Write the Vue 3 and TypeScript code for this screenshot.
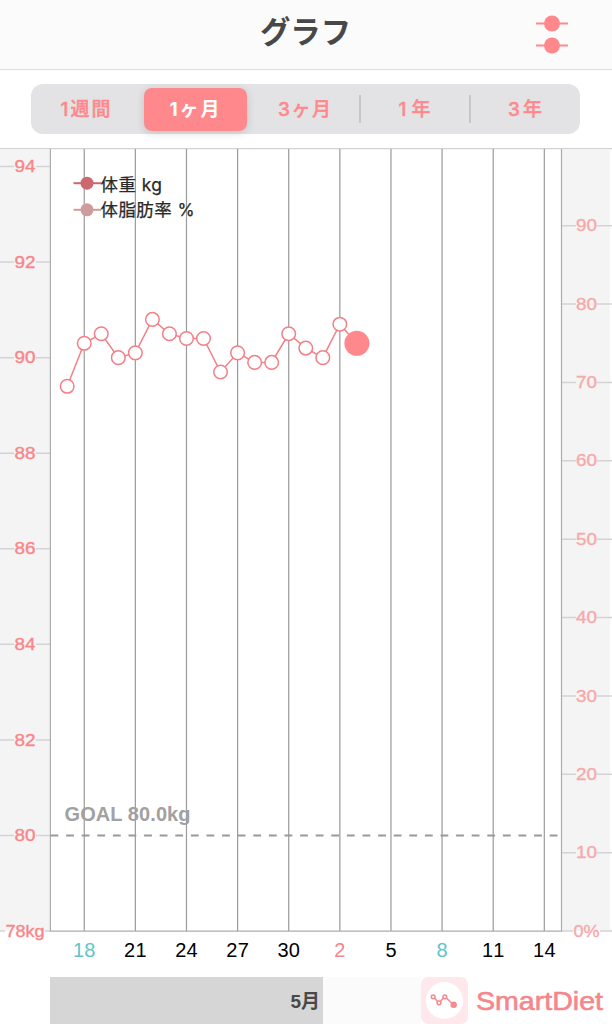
<script setup lang="ts">
interface Tick { label: string; y: number; x: number; width: number; gap: [number, number] }
interface Day { label: string; x: number; tone: 'weekday' | 'saturday' | 'sunday'; width: number }

const periods = [
  { label: '1週間', width: 50, shift: -0.5 },
  { label: '1ヶ月', width: 50, shift: -0.5 },
  { label: '3ヶ月', width: 53, shift: -0.5 },
  { label: '1年', width: 32, shift: -0.5 },
  { label: '3年', width: 34, shift: 0 },
]
const selected = 1

const bottom = 931
const kgToY = (kg: number): number => bottom - (kg - 78) * 47.78
const percentToY = (p: number): number => bottom - p * 7.837
const dayToX = (i: number): number => 67.2 + i * 17.04

const weights = [89.4, 90.3, 90.5, 90.0, 90.1, 90.8, 90.5, 90.4, 90.4, 89.7, 90.1, 89.9, 89.9, 90.5, 90.2, 90.0, 90.7, 90.3]
const points = weights.map((kg, i) => ({ x: dayToX(i), y: kgToY(kg) }))
const linePoints = points.map((p) => `${p.x},${p.y}`).join(' ')
const latest = points[points.length - 1]

const leftTicks: Tick[] = [94, 92, 90, 88, 86, 84, 82, 80, 78].map((kg) => ({
  label: kg === 78 ? '78kg' : String(kg),
  y: kgToY(kg),
  x: kg === 78 ? 5.5 : 14.5,
  width: kg === 78 ? 39 : 21,
  gap: kg === 78 ? [5, 45] : [14, 36],
}))
const rightTicks: Tick[] = [90, 80, 70, 60, 50, 40, 30, 20, 10, 0].map((p) => ({
  label: p === 0 ? '0%' : String(p),
  y: percentToY(p),
  x: p === 0 ? 573.5 : 576,
  width: p === 0 ? 26 : 21,
  gap: p === 0 ? [573, 600] : [576, 597],
}))

const days: Day[] = ['18', '21', '24', '27', '30', '2', '5', '8', '11', '14'].map((label, i) => ({
  label,
  x: dayToX(1 + i * 3),
  tone: label === '18' || label === '8' ? 'saturday' : label === '2' ? 'sunday' : 'weekday',
  width: label.length === 1 ? 11 : 22.5,
}))
</script>

<template>
  <div class="screen">
    <header class="bar">
      <svg class="title" width="120" height="56" viewBox="0 0 120 56">
        <text x="14" y="43" textLength="91" lengthAdjust="spacingAndGlyphs">グラフ</text>
      </svg>
      <svg class="settings" width="34" height="40" viewBox="0 0 34 40">
        <path d="M1 8.5H33M1 30.5H33" />
        <circle cx="17" cy="8.5" r="8" />
        <circle cx="17" cy="30.5" r="8" />
      </svg>
    </header>

    <div class="range">
      <nav class="segments">
        <button
          v-for="(period, i) in periods"
          :key="period.label"
          class="segment"
          :class="{ active: i === selected, divided: i > selected + 1 }"
        >
          <svg width="60" height="28" viewBox="0 0 60 28">
            <text
              :x="30 + period.shift - period.width / 2"
              y="21"
              :textLength="period.width"
            >{{ period.label }}</text>
          </svg>
        </button>
      </nav>
    </div>

    <svg class="chart" width="612" height="829" viewBox="0 148 612 829">
      <rect class="axis-band" x="0" y="150" width="50" height="781" />
      <rect class="axis-band" x="562" y="150" width="48" height="781" />
      <path class="top-rule" d="M0 148.5H612" />

      <g class="ticks">
        <template v-for="tick in leftTicks" :key="tick.label">
          <path :d="`M0 ${tick.y}H${tick.gap[0]}M${tick.gap[1]} ${tick.y}H50`" />
          <text :x="tick.x" :y="tick.y + 5.7" :textLength="tick.width" lengthAdjust="spacingAndGlyphs">{{ tick.label }}</text>
        </template>
      </g>
      <g class="ticks percent">
        <template v-for="tick in rightTicks" :key="tick.label">
          <path :d="`M562 ${tick.y}H${tick.gap[0]}M${tick.gap[1]} ${tick.y}H612`" />
          <text :x="tick.x" :y="tick.y + 5.7" :textLength="tick.width" lengthAdjust="spacingAndGlyphs">{{ tick.label }}</text>
        </template>
      </g>

      <path v-for="day in days" :key="day.label" class="grid" :d="`M${day.x} 149V931`" />
      <path class="frame" d="M50.4 149V931.2H561.5V149" />

      <g class="legend">
        <path class="weight" d="M73.5 183.2H101" />
        <circle class="weight" cx="87" cy="183.2" r="6.5" />
        <text x="100.5" y="190.5" textLength="61.5">体重 kg</text>
        <path class="fat" d="M73.5 209.8H101" />
        <circle class="fat" cx="87" cy="209.8" r="6.5" />
        <text x="100.5" y="216.3" textLength="94">体脂肪率 %</text>
      </g>

      <path class="goal-line" d="M50.5 835.5H561" />
      <text class="goal" x="64.5" y="821" textLength="126">GOAL 80.0kg</text>

      <polyline class="series" :points="linePoints" />
      <circle v-for="(p, i) in points" :key="i" class="point" :cx="p.x" :cy="p.y" r="6.8" />
      <circle class="latest" :cx="latest.x" :cy="latest.y" r="12.5" />

      <text
        v-for="day in days"
        :key="day.label"
        class="day"
        :class="day.tone"
        :x="day.x - day.width / 2"
        y="957"
        :textLength="day.width"
      >{{ day.label }}</text>
    </svg>

    <footer class="footer">
      <div class="previous-month">5月</div>
      <div class="current-month"></div>
      <div class="brand">
        <svg class="logo" width="47" height="47" viewBox="0 0 47 47">
          <rect class="tile" width="47" height="47" rx="7" />
          <circle cx="23.5" cy="23.5" r="18.5" fill="#fff" />
          <path d="M12.2 19.8L18 25.8L23.8 19.8L32.7 27.8" />
          <circle class="ring" cx="12.2" cy="19.8" r="1.9" />
          <circle class="ring" cx="18" cy="25.8" r="1.9" />
          <circle class="ring" cx="23.8" cy="19.8" r="1.9" />
          <circle class="dot" cx="32.7" cy="27.8" r="3.2" />
        </svg>
        <svg class="wordmark" width="140" height="47" viewBox="0 0 140 47">
          <text x="8" y="33" textLength="127" lengthAdjust="spacingAndGlyphs">SmartDiet</text>
        </svg>
      </div>
    </footer>
  </div>
</template>

<style>
body { margin: 0; background: #fff; }
</style>

<style scoped>
.screen {
  width: 612px;
  height: 1024px;
  overflow: hidden;
  background: #fff;
  display: flex;
  flex-direction: column;
  font-family: Inter, "Liberation Sans", "Noto Sans CJK JP", sans-serif;
}
.bar {
  box-sizing: border-box;
  height: 70px;
  flex: none;
  display: grid;
  grid-template-columns: 1fr 120px 1fr;
  background: #fbfbfb;
  border-bottom: 1px solid #dcdcdc;
}
.title { grid-column: 2; }
.title text {
  font: 700 31px "Noto Sans CJK JP", sans-serif;
  fill: #484848;
}
.settings { margin: 15px 0 0 169px; fill: #ff888c; }
.settings path { stroke: #ff888c; stroke-width: 2; }
.range {
  height: 78px;
  flex: none;
}
.segments {
  box-sizing: border-box;
  width: 549px;
  height: 50px;
  margin: 14px 0 0 31px;
  display: grid;
  grid-template-columns: repeat(5, 1fr);
  background: #e3e3e6;
  border-radius: 12px;
}
.segment {
  position: relative;
  display: flex;
  align-items: center;
  justify-content: center;
  padding: 0;
  border: 0;
  background: none;
}
.segment text {
  font: 500 19px Inter, "Noto Sans CJK JP", sans-serif;
  fill: #ff888c;
  stroke: #ff888c;
  stroke-width: 0.4;
}
.segment.active {
  margin: 3.5px 4px 3px 3.5px;
  border-radius: 8px;
  background: #ff888c;
  box-shadow: 0 2px 8px #00000025;
}
.segment.active text { font-weight: 700; fill: #fff; stroke: none; }
.segment.divided::before {
  content: "";
  position: absolute;
  left: -1px;
  top: 11px;
  width: 1.5px;
  height: 28px;
  background: #c7c7ca;
}
.chart { flex: none; display: block; }
.axis-band { fill: #f4f4f4; }
.top-rule { stroke: #d2d2d2; stroke-width: 1.5; }
.ticks path { stroke: #d3d3d3; stroke-width: 1.5; fill: none; }
.ticks text {
  font: 400 15.7px "Liberation Sans", sans-serif;
  fill: #fa8488;
  stroke: #fa8488;
  stroke-width: 0.35;
}
.ticks.percent text { fill: #f7a9aa; stroke: #f7a9aa; }
.grid { stroke: #9a9a9a; stroke-width: 1.2; }
.frame { fill: none; stroke: #acacac; stroke-width: 1.2; }
.legend path { stroke-width: 2; }
.legend text {
  font: 400 17.4px Inter, "Noto Sans CJK JP", sans-serif;
  fill: #292929;
  stroke: #292929;
  stroke-width: 0.25;
}
.weight { fill: #cc6870; stroke: #cc6870; }
.fat { fill: #cf9c9c; stroke: #cf9c9c; }
.legend circle { stroke: none; }
.goal-line { stroke: #999; stroke-width: 2; stroke-dasharray: 7.8 7.8; }
.goal {
  font: 700 20px "Liberation Sans", sans-serif;
  fill: #a1a1a1;
}
.series { fill: none; stroke: #f37f87; stroke-width: 1.5; }
.point { fill: #fff; stroke: #f37f87; stroke-width: 1.5; }
.latest { fill: #ff888c; }
.day {
  font: 400 20px "Liberation Sans", sans-serif;
  font-kerning: none;
  fill: #000;
}
.day.saturday { fill: #61c4cb; }
.day.sunday { fill: #f6858c; }
.footer {
  height: 47px;
  flex: none;
  display: flex;
  padding-left: 50px;
}
.previous-month {
  box-sizing: border-box;
  width: 273px;
  padding-right: 3px;
  text-align: right;
  background: #d6d6d6;
  color: #484848;
  font: 600 19px/49px "Liberation Sans", "Noto Sans CJK JP", sans-serif;
}
.current-month { width: 98px; background: #fbfbfb; }
.brand { display: flex; }
.logo { fill: none; }
.logo .tile { fill: #ffe8eb; }
.logo path, .ring { stroke: #f58990; stroke-width: 1.5; }
.logo .ring { fill: #fff; }
.logo .dot { fill: #f58990; }
.wordmark text {
  font: 400 26px "Liberation Sans", sans-serif;
  fill: #f6868b;
  stroke: #f6868b;
  stroke-width: 0.6;
}
</style>
